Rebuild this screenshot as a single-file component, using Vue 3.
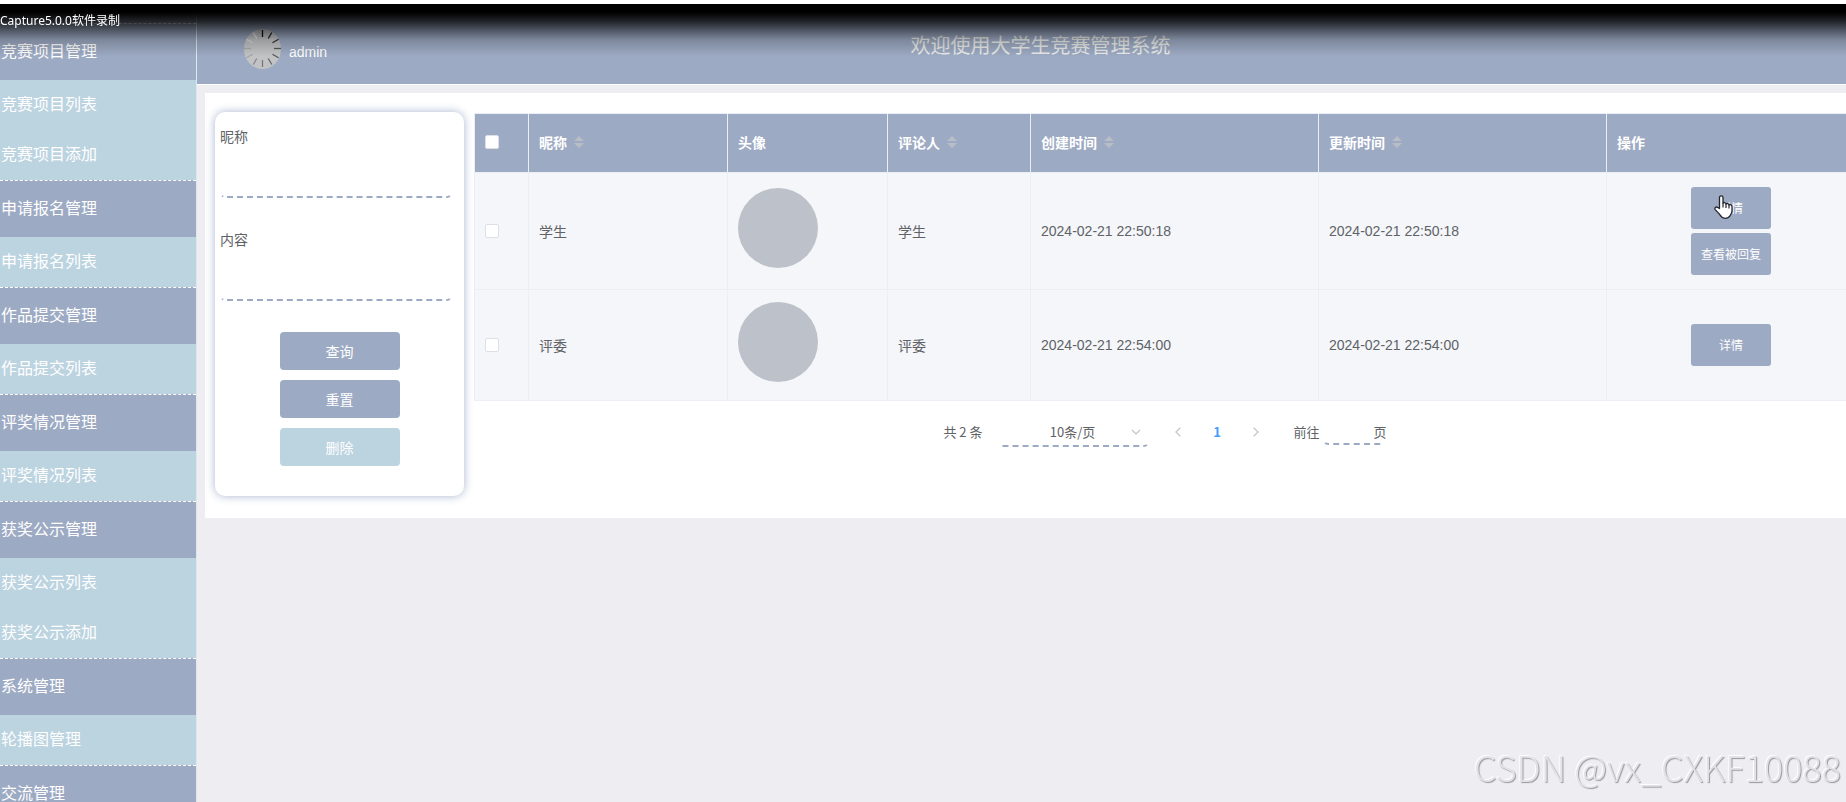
<script setup>
import { ref } from 'vue'

const menu = [
  { title: '竞赛项目管理', items: ['竞赛项目列表', '竞赛项目添加'] },
  { title: '申请报名管理', items: ['申请报名列表'] },
  { title: '作品提交管理', items: ['作品提交列表'] },
  { title: '评奖情况管理', items: ['评奖情况列表'] },
  { title: '获奖公示管理', items: ['获奖公示列表', '获奖公示添加'] },
  { title: '系统管理', items: ['轮播图管理'] },
  { title: '交流管理', items: [] },
]

const columns = [
  { label: '昵称', sortable: true },
  { label: '头像', sortable: false },
  { label: '评论人', sortable: true },
  { label: '创建时间', sortable: true },
  { label: '更新时间', sortable: true },
  { label: '操作', sortable: false },
]

const rows = ref([
  { name: '学生', author: '学生', created: '2024-02-21 22:50:18', updated: '2024-02-21 22:50:18', actions: ['详情', '查看被回复'], pointed: true },
  { name: '评委', author: '评委', created: '2024-02-21 22:54:00', updated: '2024-02-21 22:54:00', actions: ['详情'], pointed: false },
])

const ticks = Array.from({ length: 12 }, (_, i) => ({
  angle: i * 30,
  color: ['#111', '#222', '#333', '#555', '#555', '#666', '#777', '#888', '#a2a2a2', '#aaa', '#dcdcdc', '#eee'][i],
}))

const nickname = ref('')
const content = ref('')
const pageSize = ref('10')
const jump = ref('')
</script>

<template>
  <div class="page">
    <nav class="sidebar">
      <section v-for="group in menu" :key="group.title" class="group">
        <a href="#" class="group-title">{{ group.title }}</a>
        <a v-for="item in group.items" :key="item" href="#" class="group-item">{{ item }}</a>
      </section>
    </nav>

    <div class="main">
      <header class="topbar">
        <div class="user">
          <svg class="user-avatar" viewBox="0 0 37 40" aria-hidden="true">
            <ellipse cx="18.5" cy="20" rx="18.5" ry="20" fill="#c2c3c5" />
            <line
              v-for="t in ticks" :key="t.angle"
              x1="18.5" y1="1" x2="18.5" y2="8"
              :stroke="t.color" stroke-width="1.3"
              :transform="`rotate(${t.angle} 18.5 19.5)`"
            />
          </svg>
          <span class="user-name">admin</span>
        </div>
        <h1 class="title">欢迎使用大学生竞赛管理系统</h1>
      </header>

      <main class="panel">
        <form class="search" @submit.prevent>
          <label class="field-label" for="nickname">昵称</label>
          <input id="nickname" v-model="nickname" class="dashed field" type="text" />
          <label class="field-label" for="content">内容</label>
          <input id="content" v-model="content" class="dashed field" type="text" />
          <div class="search-buttons">
            <button type="submit" class="btn">查询</button>
            <button type="reset" class="btn">重置</button>
            <button type="button" class="btn light">删除</button>
          </div>
        </form>

        <div class="results">
          <div class="results-body">
            <table class="grid">
              <colgroup>
                <col class="c-check" /><col class="c-name" /><col class="c-avatar" /><col class="c-author" />
                <col class="c-time" /><col class="c-time" /><col />
              </colgroup>
              <thead>
                <tr>
                  <th><input type="checkbox" class="check" aria-label="全选" /></th>
                  <th v-for="col in columns" :key="col.label">
                    <span class="head">
                      {{ col.label }}
                      <svg v-if="col.sortable" class="sort" viewBox="0 0 10 12" aria-hidden="true">
                        <path d="M5 0 L10 5 H0 Z M0 7 H10 L5 12 Z" fill="#b9bdc6" />
                      </svg>
                    </span>
                  </th>
                </tr>
              </thead>
              <tbody>
                <tr v-for="row in rows" :key="row.name">
                  <td><input type="checkbox" class="check" :aria-label="row.name" /></td>
                  <td>{{ row.name }}</td>
                  <td><div class="avatar"></div></td>
                  <td>{{ row.author }}</td>
                  <td>{{ row.created }}</td>
                  <td>{{ row.updated }}</td>
                  <td>
                    <div class="actions">
                      <button v-for="a in row.actions" :key="a" type="button" class="action">{{ a }}</button>
                      <svg v-if="row.pointed" class="hand" viewBox="0 0 19 24" aria-hidden="true">
                        <path
                          d="M5.5 13.5V2.6C5.5 .3 9 .3 9 2.6V8.2C9.8 7 11.8 7.4 12 9C13 8 14.8 8.6 15 10C16.2 9.2 18 10 18 11.6V16C18 18.4 16.4 19.6 15.8 21.2C14.6 23.2 12 23.4 10.4 23.2C7.6 23 6.4 20.6 5 18.6L1.2 14.6C.2 12.8 2 11.4 3.6 12.4Z"
                          fill="#fff" stroke="#23262e" stroke-width="1.3" stroke-linejoin="round"
                        />
                        <path d="M9 8V12.5M12 9V13M15 10V13.5" fill="none" stroke="#23262e" stroke-width="1.2" />
                      </svg>
                    </div>
                  </td>
                </tr>
              </tbody>
            </table>

            <div class="pager">
              <span class="total">共 2 条</span>
              <span class="size">
                <select v-model="pageSize" class="dashed size-select" aria-label="每页条数">
                  <option value="10">10条/页</option>
                  <option value="20">20条/页</option>
                </select>
                <svg class="size-arrow" viewBox="0 0 10 6" aria-hidden="true">
                  <path d="M1 1 L5 5 L9 1" fill="none" stroke="#c0c4cc" stroke-width="1.2" />
                </svg>
              </span>
              <button type="button" class="step" aria-label="上一页">
                <svg viewBox="0 0 6 10"><path d="M5.400 .6 L1 5 L5.400 9.400" fill="none" stroke="#c0c4cc" stroke-width="1.3" /></svg>
              </button>
              <button type="button" class="step current">1</button>
              <button type="button" class="step" aria-label="下一页">
                <svg viewBox="0 0 6 10"><path d="M.6 .6 L5 5 L.6 9.400" fill="none" stroke="#c0c4cc" stroke-width="1.3" /></svg>
              </button>
              <label class="jump-label" for="jump">前往</label>
              <span class="jump"><input id="jump" v-model="jump" class="dashed jump-input" type="text" /></span>
              <span>页</span>
            </div>
          </div>
        </div>
      </main>
    </div>

    <div class="shade"><span class="recorder">Capture5.0.0软件录制</span></div>
    <div class="watermark">CSDN @vx_CXKF10088</div>
  </div>
</template>

<style>
html,
body {
  margin: 0;
  height: 100%;
  overflow: hidden;
  background: #eeedf2;
}
#app {
  height: 100%;
}
</style>

<style scoped>
* {
  box-sizing: border-box;
}
.page {
  display: flex;
  height: 100%;
  overflow: hidden;
  background: #eeedf2;
  color: #606266;
  font-family: "Liberation Sans", "Noto Sans CJK SC", sans-serif;
  font-size: 14px;
}
.sidebar {
  flex: none;
  width: 197px;
  padding-top: 23px;
  border-right: 1px solid #dfe6ee;
  background: #9daac3;
  overflow: hidden;
}
.group {
  border-top: 1px dashed #fff;
  background: #9daac3;
}
.group-title,
.group-item {
  display: block;
  padding-left: 1px;
  color: #fff;
  font-size: 16px;
  text-decoration: none;
}
.group-title {
  line-height: 56px;
}
.group-item {
  line-height: 50px;
  background: #bcd3e0;
}
.main {
  flex: 1;
  min-width: 0;
}
.topbar {
  display: grid;
  grid-template-columns: 1fr auto 1fr;
  align-items: center;
  height: 85px;
  padding: 4px 0 0 38px;
  border-bottom: 1px solid #fff;
  background: #9daac3;
}
.user {
  display: flex;
  align-items: center;
  gap: 8px;
  padding: 10px 0 0 9px;
}
.user-avatar {
  width: 37px;
  height: 40px;
}
.user-name {
  padding-top: 6px;
  color: #fff;
}
.title {
  margin: 0;
  color: #e8ebe9;
  font-size: 20px;
  font-weight: 400;
}
.panel {
  display: flex;
  align-items: flex-start;
  gap: 10px;
  margin: 8px 0 0 8px;
  padding: 19px 0 22px 10px;
  background: #fff;
}
.search {
  flex: none;
  width: 249px;
  padding: 10px 5px 30px;
  border-radius: 10px;
  background: #fff;
  box-shadow: 0 0 10px #a9b4cf;
}
.field-label {
  display: block;
  line-height: 30px;
}
.dashed {
  padding: 0;
  border: 2px dashed transparent;
  border-bottom-color: #9daac3;
  border-radius: 5px;
  outline: none;
  background: transparent;
  color: #606266;
  font: inherit;
}
.field {
  display: block;
  width: 232px;
  height: 40px;
  margin: 6px 0 27px;
}
.search-buttons {
  display: flex;
  flex-direction: column;
  align-items: center;
  gap: 10px;
  padding-top: 4px;
}
.btn {
  width: 120px;
  height: 38px;
  padding: 0 0 1px;
  border: 0;
  border-radius: 4px;
  background: #9daac3;
  color: #fff;
  font: inherit;
}
.btn.light {
  background: #bcd3e0;
}
.results {
  flex: 1;
  min-width: 0;
  overflow: hidden;
}
.results-body {
  min-width: 1382px;
}
.grid {
  width: 100%;
  margin-top: 1px;
  border: 1px solid #ebeef5;
  border-right: 0;
  border-bottom: 0;
  border-spacing: 0;
  table-layout: fixed;
}
.c-check {
  width: 54px;
}
.c-name {
  width: 199px;
}
.c-avatar {
  width: 160px;
}
.c-author {
  width: 143px;
}
.c-time {
  width: 288px;
}
th,
td {
  padding: 12px 10px;
  border-right: 1px solid #ebeef5;
  border-bottom: 1px solid #ebeef5;
  text-align: left;
}
th {
  height: 59px;
  padding: 0 10px 2px;
  background: #9daac3;
  color: #fff;
}
td {
  background: #f4f6fa;
}
.head {
  display: flex;
  align-items: center;
  gap: 7px;
}
.sort {
  width: 10px;
  height: 12px;
}
.check {
  display: block;
  width: 14px;
  height: 14px;
  margin: 0;
  appearance: none;
  border: 1px solid #dcdfe6;
  border-radius: 2px;
  background: #fff;
}
.avatar {
  width: 80px;
  height: 80px;
  margin-bottom: 6px;
  border-radius: 50%;
  background: #bdc1c9;
}
.actions {
  position: relative;
  display: flex;
  flex-direction: column;
  gap: 4px;
  width: 80px;
  margin: 0 auto;
  padding: 2px 0;
}
.action {
  height: 42px;
  padding: 0 0 2px;
  border: 0;
  border-radius: 3px;
  background: #9daac3;
  color: #fff;
  font: inherit;
  font-size: 12px;
}
.hand {
  position: absolute;
  top: 10px;
  left: 23px;
  width: 19px;
  height: 24px;
}
.pager {
  display: flex;
  justify-content: center;
  align-items: center;
  height: 32px;
  margin-top: 14px;
  font-family: "Noto Sans CJK SC", sans-serif;
  font-size: 13px;
}
.total {
  margin-right: 14px;
}
.size {
  position: relative;
  width: 152px;
  margin-right: 10px;
}
.size-select {
  display: block;
  width: 100%;
  height: 32px;
  appearance: none;
  text-align: center;
  text-align-last: center;
}
.size-arrow {
  position: absolute;
  top: 14px;
  right: 8px;
  width: 10px;
  height: 6px;
}
.step {
  width: 39px;
  height: 28px;
  padding: 0;
  border: 0;
  background: transparent;
  font: inherit;
}
.step svg {
  width: 6px;
  height: 10px;
}
.current {
  color: #409eff;
  font-weight: 700;
}
.jump-label {
  margin: 0 3px 0 18px;
}
.jump {
  width: 51px;
}
.jump-input {
  display: block;
  width: 62px;
  height: 28px;
}
.shade {
  position: fixed;
  inset: 0 0 auto;
  height: 58px;
  border-top: 4px solid #fff;
  background: linear-gradient(#000 0, #000 8px, rgba(0, 0, 0, 0.8) 17px, rgba(0, 0, 0, 0.5) 26px, rgba(0, 0, 0, 0.2) 36px, transparent 52px);
  pointer-events: none;
}
.recorder {
  display: block;
  padding-top: 8px;
  color: #fff;
  font-family: "Noto Sans", "Noto Sans CJK SC", sans-serif;
  font-size: 12px;
  line-height: 18px;
}
.watermark {
  position: fixed;
  right: 5px;
  bottom: 9px;
  color: #e2e2e6;
  font-family: "Noto Sans CJK SC", sans-serif;
  font-size: 36px;
  font-weight: 300;
  line-height: 54px;
  text-shadow: 1px 1px 1px #999, -1px -1px 1px #fff;
  pointer-events: none;
}
</style>
